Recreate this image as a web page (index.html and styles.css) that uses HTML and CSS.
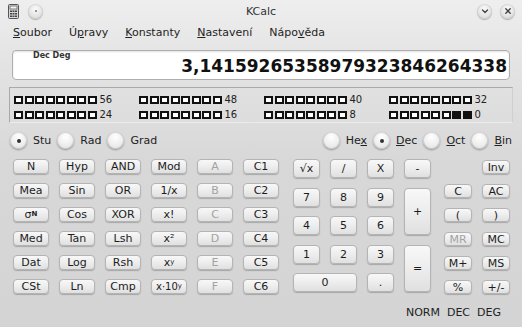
FILE: index.html
```html
<!DOCTYPE html>
<html lang="cs">

<head>
    <meta charset="UTF-8">
    <meta name="viewport" content="width=device-width, initial-scale=1.0">
    <title>KCalc</title>
    <link rel="stylesheet" href="styles.css">
</head>

<body>
    <header class="titlebar">
        <div class="left">
            <svg class="appicon" width="11" height="15" viewBox="0 0 11 15">
                <rect x="0.5" y="0.5" width="10" height="14" rx="1" fill="#d8d8d8" stroke="#555" />
                <rect x="2" y="2" width="7" height="3" fill="#f4f4f4" stroke="#666" stroke-width="0.8" />
                <g fill="#444">
                    <rect x="2" y="6.5" width="2" height="1.5" />
                    <rect x="4.5" y="6.5" width="2" height="1.5" />
                    <rect x="7" y="6.5" width="2" height="1.5" />
                    <rect x="2" y="9" width="2" height="1.5" />
                    <rect x="4.5" y="9" width="2" height="1.5" />
                    <rect x="7" y="9" width="2" height="1.5" />
                    <rect x="2" y="11.5" width="2" height="1.5" />
                    <rect x="4.5" y="11.5" width="2" height="1.5" />
                    <rect x="7" y="11.5" width="2" height="1.5" />
                </g>
            </svg>
            <span class="wbtn"><svg width="14" height="14" viewBox="0 0 14 14"><circle cx="7" cy="7" r="1" fill="#777" /></svg></span>
        </div>
        <span class="title">KCalc</span>
        <div class="right">
            <span class="wbtn"><svg width="14" height="14" viewBox="0 0 14 14"><path d="M4.5 6 L7 8.5 L9.5 6" fill="none" stroke="#444" stroke-width="1.4" stroke-linecap="round" stroke-linejoin="round" /></svg></span>
            <span class="wbtn"><svg width="14" height="14" viewBox="0 0 14 14"><path d="M4.8 4.8 L9.2 9.2 M9.2 4.8 L4.8 9.2" fill="none" stroke="#444" stroke-width="1.4" stroke-linecap="round" /></svg></span>
        </div>
    </header>

    <nav class="menubar">
        <span><u>S</u>oubor</span>
        <span>Ú<u>p</u>ravy</span>
        <span><u>K</u>onstanty</span>
        <span><u>N</u>astavení</span>
        <span>Nápo<u>v</u>ěda</span>
    </nav>

    <main>
        <section class="display">
            <span class="mode">Dec Deg</span>
            <span class="value">3,14159265358979323846264338</span>
        </section>

        <section class="bits">
            <div class="group"><span class="sq"></span><span class="sq"></span><span class="sq"></span><span class="sq"></span><span class="sq"></span><span class="sq"></span><span class="sq"></span><span class="sq"></span><span class="num">56</span></div>
            <div class="group"><span class="sq"></span><span class="sq"></span><span class="sq"></span><span class="sq"></span><span class="sq"></span><span class="sq"></span><span class="sq"></span><span class="sq"></span><span class="num">48</span></div>
            <div class="group"><span class="sq"></span><span class="sq"></span><span class="sq"></span><span class="sq"></span><span class="sq"></span><span class="sq"></span><span class="sq"></span><span class="sq"></span><span class="num">40</span></div>
            <div class="group"><span class="sq"></span><span class="sq"></span><span class="sq"></span><span class="sq"></span><span class="sq"></span><span class="sq"></span><span class="sq"></span><span class="sq"></span><span class="num">32</span></div>
            <div class="group"><span class="sq"></span><span class="sq"></span><span class="sq"></span><span class="sq"></span><span class="sq"></span><span class="sq"></span><span class="sq"></span><span class="sq"></span><span class="num">24</span></div>
            <div class="group"><span class="sq"></span><span class="sq"></span><span class="sq"></span><span class="sq"></span><span class="sq"></span><span class="sq"></span><span class="sq"></span><span class="sq"></span><span class="num">16</span></div>
            <div class="group"><span class="sq"></span><span class="sq"></span><span class="sq"></span><span class="sq"></span><span class="sq"></span><span class="sq"></span><span class="sq"></span><span class="sq"></span><span class="num">8</span></div>
            <div class="group"><span class="sq"></span><span class="sq"></span><span class="sq"></span><span class="sq"></span><span class="sq"></span><span class="sq"></span><span class="sq on"></span><span class="sq on"></span><span class="num">0</span></div>
        </section>

        <section class="modes">
            <div class="radios">
                <span class="radio checked"></span><span>Stu</span>
                <span class="radio"></span><span>Rad</span>
                <span class="radio"></span><span>Grad</span>
            </div>
            <div class="radios">
                <span class="radio"></span><span>He<u>x</u></span>
                <span class="radio checked"></span><span><u>D</u>ec</span>
                <span class="radio"></span><span><u>O</u>ct</span>
                <span class="radio"></span><span><u>B</u>in</span>
            </div>
        </section>

        <section class="keypad">
            <div class="keys fn">
                <button>N</button><button>Hyp</button><button>AND</button><button>Mod</button><button class="off">A</button><button>C1</button>
                <button>Mea</button><button>Sin</button><button>OR</button><button>1/x</button><button class="off">B</button><button>C2</button>
                <button class="sigma">σ<sub>N</sub></button><button>Cos</button><button>XOR</button><button>x!</button><button class="off">C</button><button>C3</button>
                <button>Med</button><button>Tan</button><button>Lsh</button><button>x²</button><button class="off">D</button><button>C4</button>
                <button>Dat</button><button>Log</button><button>Rsh</button><button>x<sup>y</sup></button><button class="off">E</button><button>C5</button>
                <button>CSt</button><button>Ln</button><button>Cmp</button><button class="small">x·10<sup>y</sup></button><button class="off">F</button><button>C6</button>
            </div>

            <div class="keys num">
                <button>√x</button><button>/</button><button>X</button><button>-</button>
                <button>7</button><button>8</button><button>9</button><button class="tall">+</button>
                <button>4</button><button>5</button><button>6</button>
                <button>1</button><button>2</button><button>3</button><button class="tall">=</button>
                <button class="wide">0</button><button>.</button>
            </div>

            <div class="keys mem">
                <button class="c2">Inv</button>
                <button>C</button><button>AC</button>
                <button>(</button><button>)</button>
                <button class="off">MR</button><button>MC</button>
                <button>M+</button><button>MS</button>
                <button>%</button><button>+/-</button>
            </div>
        </section>
    </main>

    <footer class="status">
        <span>NORM</span>
        <span>DEC</span>
        <span>DEG</span>
    </footer>
</body>

</html>
```

FILE: styles.css
```css
* {
    padding: 0;
    margin: 0;
    box-sizing: border-box;
    font-family: "DejaVu Sans", Verdana, sans-serif;
    font-size: 11px;
    color: #222;
}

body {
    width: 522px;
    height: 327px;
    overflow: hidden;
    background: linear-gradient(#eeeeee 0px, #e4e4e4 60px, #d8d8d8 160px, #d4d4d4 327px);
    display: flex;
    flex-direction: column;
}

u {
    text-decoration: underline;
    text-underline-offset: 1px;
}

.titlebar {
    height: 22px;
    display: flex;
    align-items: center;
    justify-content: space-between;
    padding: 0 7px 0 8px;
    position: relative;
}

.titlebar .left,
.titlebar .right {
    display: flex;
    align-items: center;
    gap: 9px;
}

.titlebar .right {
    gap: 8px;
}

.titlebar .title {
    position: absolute;
    left: 0;
    right: 0;
    text-align: center;
    color: #333;
    pointer-events: none;
}

.wbtn {
    width: 15px;
    height: 15px;
    border-radius: 50%;
    background: radial-gradient(circle at 50% 35%, #fbfbfb, #dedede 70%, #cfcfcf);
    box-shadow: 0 1px 1px rgba(0, 0, 0, 0.25), inset 0 0 0 1px rgba(0, 0, 0, 0.08);
    display: flex;
    align-items: center;
    justify-content: center;
}

.menubar {
    height: 20px;
    display: flex;
    align-items: center;
    padding-left: 13px;
    gap: 17px;
}

.menubar span {
    color: #1e1e1e;
}

main {
    padding: 8px 12px 0 12px;
    display: flex;
    flex-direction: column;
}

.display {
    height: 30px;
    background-color: white;
    border: 1px solid #aeaeae;
    border-radius: 4px;
    box-shadow: inset 0 1px 2px rgba(0, 0, 0, 0.12);
    position: relative;
    display: flex;
    justify-content: flex-end;
    align-items: flex-end;
    padding: 0 2px 3px 0;
}

.display .mode {
    position: absolute;
    left: 20px;
    top: 0;
    font-size: 8px;
    font-weight: bold;
    color: #333;
}

.display .value {
    font-size: 17px;
    font-weight: bold;
    color: #111;
    line-height: 20px;
}

.bits {
    margin: 7px -3px 0 -3px;
    height: 36px;
    border: 1px solid #a9a9a9;
    border-bottom-color: #ececec;
    border-right-color: #cfcfcf;
    display: grid;
    grid-template-columns: repeat(4, 125px);
    grid-auto-rows: 15px;
    padding: 4px 0 0 4px;
}

.bits .group {
    display: flex;
    align-items: center;
    gap: 1.5px;
}

.bits .sq {
    width: 9px;
    height: 8px;
    border: 2px solid #111;
    background-color: white;
}

.bits .sq.on {
    background-color: #111;
}

.bits .num {
    font-size: 10px;
    margin-left: 1.5px;
    color: #222;
}

.modes {
    margin: 9px -2px 0 -2px;
    height: 17px;
    display: flex;
    justify-content: space-between;
    align-items: center;
}

.radios {
    display: flex;
    align-items: center;
    gap: 6px;
}

.radios span {
    color: #222;
}

.radio {
    width: 17px;
    height: 17px;
    border-radius: 50%;
    background: radial-gradient(circle at 50% 30%, #ffffff, #ececec 60%, #d9d9d9);
    box-shadow: 0 1px 2px rgba(0, 0, 0, 0.35), inset 0 0 0 1px rgba(0, 0, 0, 0.12);
    display: flex;
    align-items: center;
    justify-content: center;
}

.radio.checked::after {
    content: "";
    width: 4px;
    height: 4px;
    border-radius: 50%;
    background-color: #333;
}

.keypad {
    margin-top: 10px;
    margin-left: 1px;
    display: flex;
    align-items: flex-start;
}

.keys {
    display: grid;
}

.keys button {
    border: 1px solid #b4b4b4;
    border-radius: 4px;
    background: linear-gradient(#f8f8f8, #ededed 50%, #e0e0e0);
    box-shadow: 0 1px 1px rgba(0, 0, 0, 0.22);
    color: #1c1c1c;
    line-height: 1;
    display: flex;
    align-items: center;
    justify-content: center;
    cursor: pointer;
}

.keys button.off {
    color: #a2a2a2;
}

.keys button sub,
.keys button sup {
    font-size: 7px;
    color: inherit;
}

.keys button.sigma sub {
    font-weight: bold;
    vertical-align: -2px;
}

.keys button.small {
    font-size: 10px;
}

.keys.fn {
    grid-template-columns: repeat(6, 36px);
    grid-auto-rows: 15px;
    column-gap: 10px;
    row-gap: 9px;
}

.keys.num {
    margin-left: 14px;
    grid-template-columns: repeat(4, 27px);
    grid-template-rows: repeat(5, 19px);
    column-gap: 10px;
    row-gap: 9.5px;
}

.keys.num .tall {
    grid-column: 4;
    grid-row: span 2;
}

.keys.num .wide {
    grid-column: span 2;
}

.keys.mem {
    margin-left: 13px;
    grid-template-columns: repeat(2, 28px);
    grid-auto-rows: 14px;
    column-gap: 10px;
    row-gap: 10px;
    margin-top: 1px;
}

.keys.mem .c2 {
    grid-column: 2;
}

.status {
    margin-top: auto;
    height: 29px;
    display: flex;
    justify-content: flex-end;
    align-items: center;
    gap: 7px;
    padding-right: 21px;
    padding-bottom: 1px;
}

.status span {
    color: #222;
}
```
